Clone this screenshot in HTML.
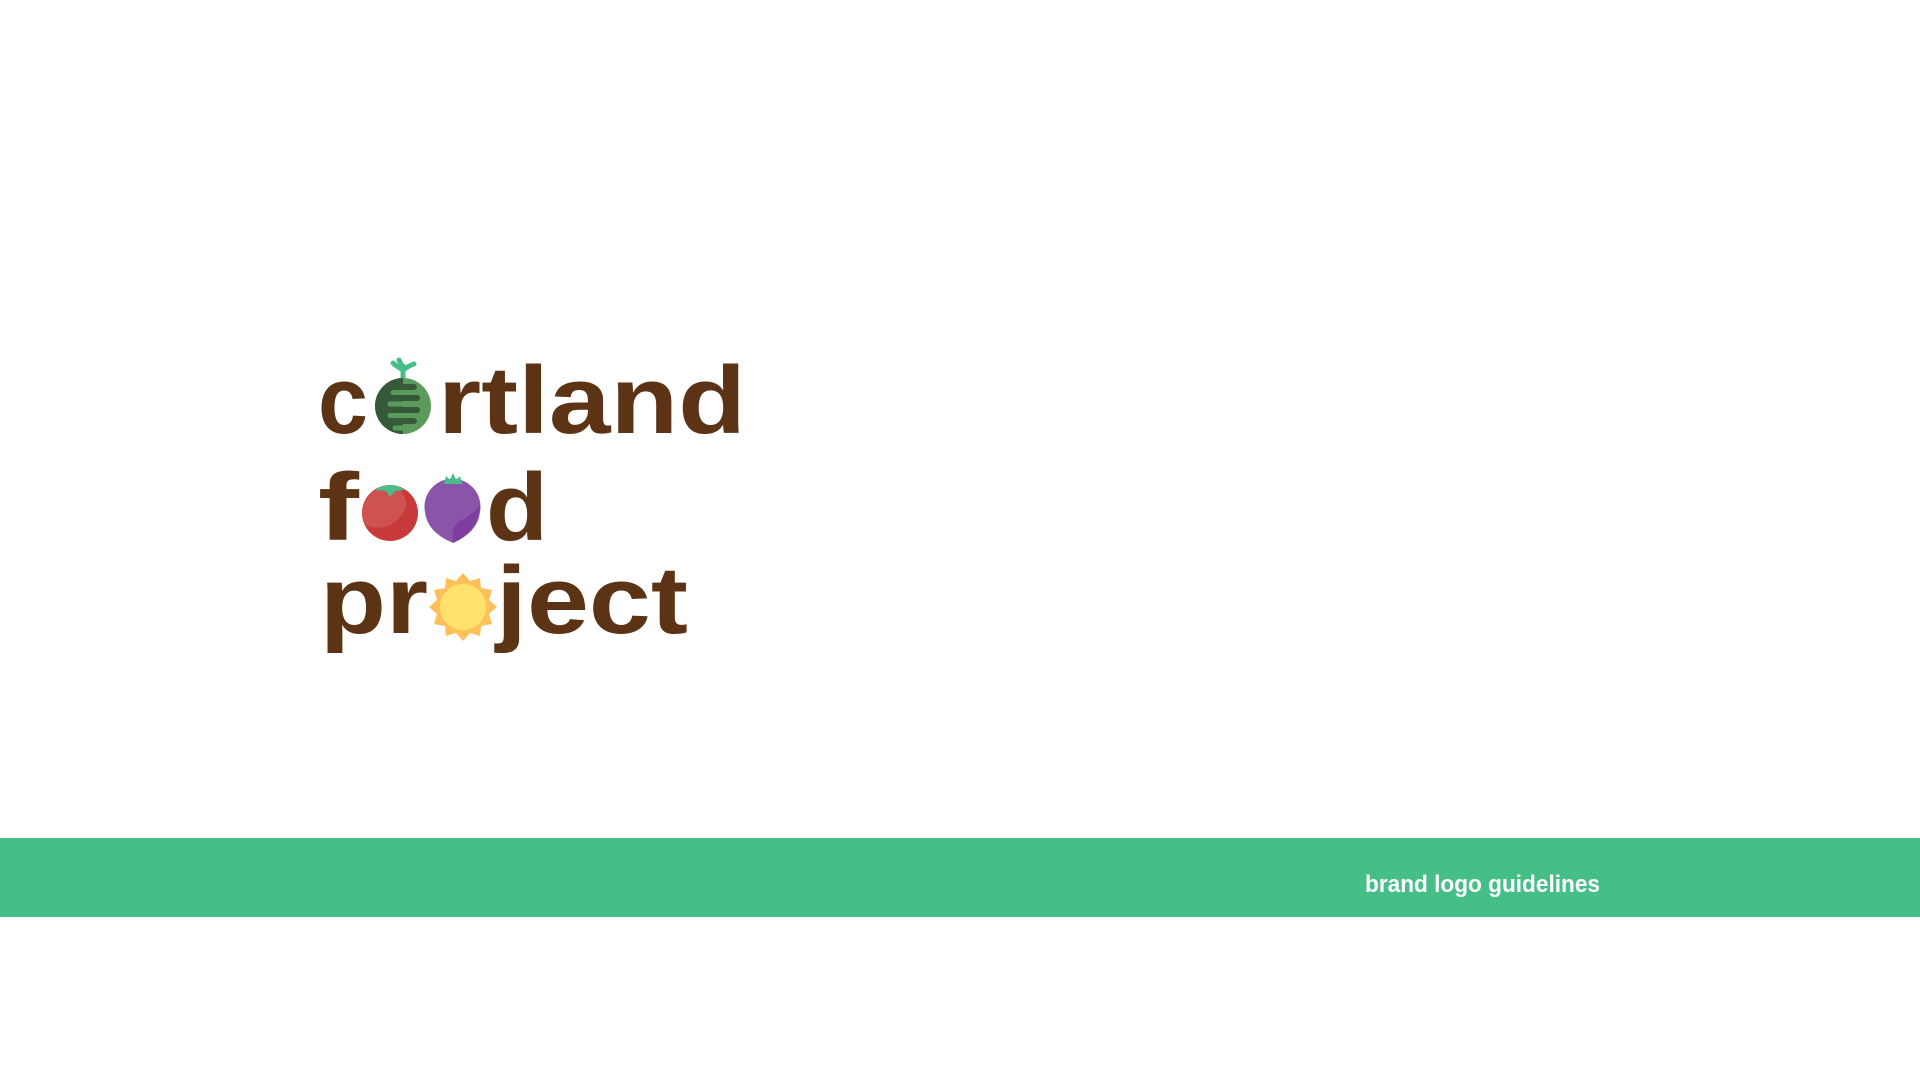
<!DOCTYPE html>
<html><head><meta charset="utf-8"><style>
html,body{margin:0;padding:0;background:#fff;width:1920px;height:1080px;overflow:hidden}
.band{position:absolute;left:0;top:838px;width:1920px;height:79px;background:#45BE87}
svg{position:absolute;left:0;top:0}
</style></head><body>
<div class="band"></div>
<svg width="1920" height="1080" viewBox="0 0 1920 1080">
<text x="1365" y="892" fill="#fff" font-family="Liberation Sans, sans-serif" font-weight="bold" font-size="24" textLength="235" lengthAdjust="spacingAndGlyphs">brand logo guidelines</text>
<g fill="#5C3315" font-family="Liberation Sans, sans-serif" font-weight="bold" font-size="96">
<text x="318" y="433" textLength="50" lengthAdjust="spacingAndGlyphs">c</text>
<text x="438" y="433" textLength="308" lengthAdjust="spacingAndGlyphs">rtland</text>
<text x="318" y="540" textLength="41" lengthAdjust="spacingAndGlyphs">f</text>
<text x="486" y="540" textLength="62" lengthAdjust="spacingAndGlyphs">d</text>
<text x="320" y="633" textLength="108" lengthAdjust="spacingAndGlyphs">pr</text>
<text x="496" y="633" textLength="192" lengthAdjust="spacingAndGlyphs">ject</text>
</g>
<!-- radish -->
<path d="M403 378 L403 366 M403 370 Q396 366 393 363 M403 370 Q410 365 414 364 M403 368 L399 360" stroke="#45BE87" stroke-width="5" stroke-linecap="round" fill="none"/>
<ellipse cx="403" cy="406" rx="28" ry="28" fill="#5A9A5A"/>
<path d="M403 378 A28 28 0 0 0 403 434 Z" fill="#36593A"/>
<g stroke="#36593A" stroke-width="6" stroke-linecap="round"><line x1="395" y1="387" x2="414" y2="387"/><line x1="391" y1="398" x2="417" y2="398"/><line x1="391" y1="410" x2="417" y2="410"/><line x1="391" y1="421" x2="414" y2="421"/></g>
<g stroke="#5A9A5A" stroke-width="5" stroke-linecap="round"><line x1="393" y1="392.5" x2="410" y2="392.5"/><line x1="390" y1="404" x2="414" y2="404"/><line x1="390" y1="415.5" x2="413" y2="415.5"/><line x1="395" y1="428" x2="408" y2="428"/></g>
<!-- tomato -->
<circle cx="390" cy="513" r="28" fill="#C9393A"/>
<path d="M395 486 A28 28 0 0 0 365 525 Q392 535 406 508 Q408 495 395 486Z" fill="#CE5350"/>
<path d="M375 490 Q390 480 405 490 L395 491 L390 497 L386 491Z" fill="#45BE87"/>
<!-- beet -->
<path d="M425 512 A28 28 0 1 1 480 512 Q478 532 453 543 Q427 532 425 512Z" fill="#8A55A8"/>
<path d="M480 505 Q478 532 453 543 Q450 525 462 520 Q476 512 480 505Z" fill="#7E3E9E"/>
<path d="M444 484 L446 476 L450 480 L453 473 L456 480 L460 476 L462 484 Z" fill="#45BE87"/>
<!-- sun -->
<g transform="translate(463,607)">
<polygon fill="#FDC05A" points="0,-34 7,-26 17,-29 18,-19 29,-17 26,-7 34,0 26,7 29,17 18,19 17,29 7,26 0,34 -7,26 -17,29 -18,19 -29,17 -26,7 -34,0 -26,-7 -29,-17 -18,-19 -17,-29 -7,-26"/>
<circle r="23" fill="#FFE26E"/>
</g>
</svg>
</body></html>
